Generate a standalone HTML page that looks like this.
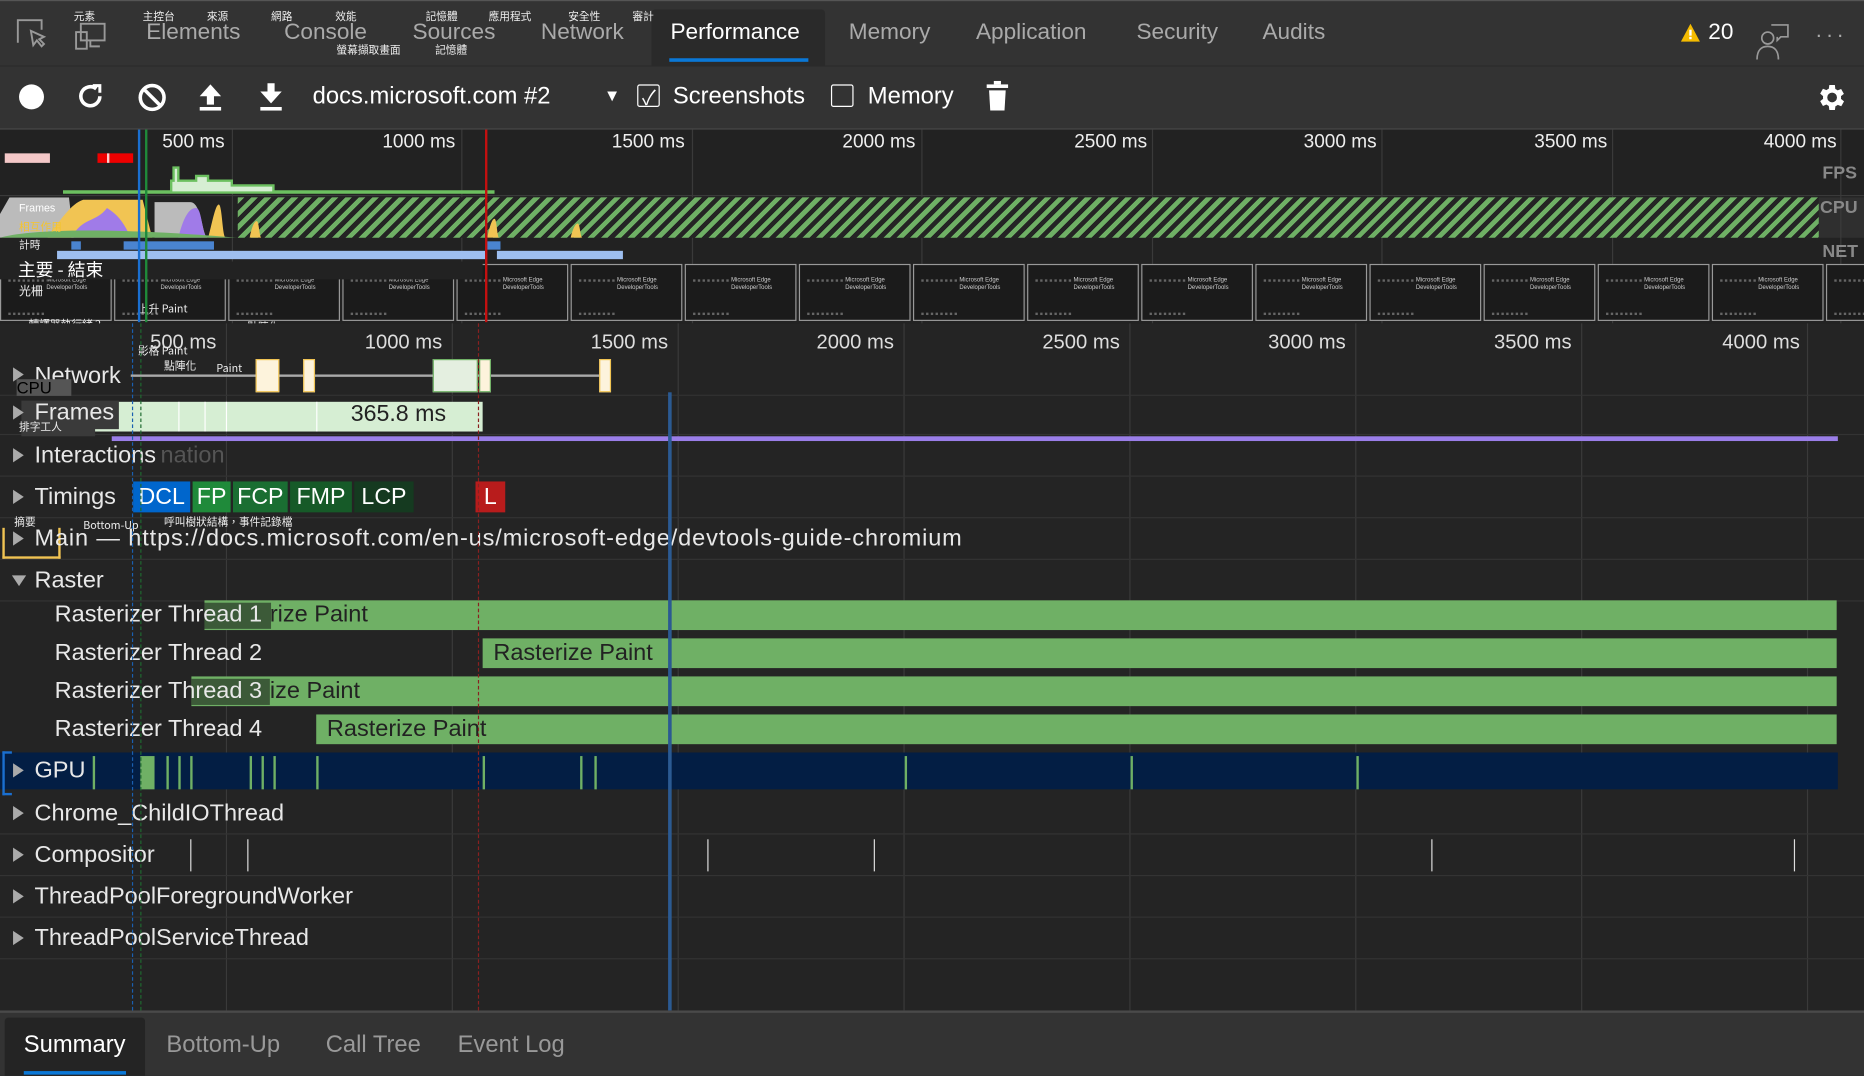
<!DOCTYPE html>
<html><head><meta charset="utf-8"><style>
html,body{margin:0;padding:0;background:#242424;overflow:hidden;width:1864px;height:1076px}
#s{position:absolute;left:0;top:0;width:1568px;height:905px;transform:scale(1.18878);transform-origin:0 0;font-family:"Liberation Sans","Noto Sans CJK TC",sans-serif;color:#ddd;background:#242424;overflow:hidden}
.a{position:absolute}
.t{position:absolute;font-size:19px;color:#aaa;top:17px}
.cj{position:absolute;font-size:9px;color:#eee;font-family:"Noto Sans CJK TC",sans-serif}
.vl{position:absolute;width:1px;background:#3a3a3a}
.tl{position:absolute;font-size:16px;color:#eee;top:111px;text-align:right;width:100px}
.rl{position:absolute;font-size:17px;color:#ddd;top:278px;text-align:right;width:100px}
.trk{position:absolute;left:0;width:1568px;border-bottom:1px solid #333}
.lab{position:absolute;left:29px;font-size:19.8px;color:#e8e8e8}
.tri{position:absolute;left:11px;width:0;height:0;border-top:6px solid transparent;border-bottom:6px solid transparent;border-left:9px solid #aaa}
.g{position:absolute;background:#6fb065}
.ss{position:absolute;top:222px;height:46px;width:92px;background:#1b1b1b;border:1px solid #999}
.ss:before{content:"";position:absolute;left:6px;top:12px;width:30px;height:26px;border-top:2px dotted #666;border-bottom:2px dotted #666}
.ss:after{content:"Microsoft Edge\A DeveloperTools";white-space:pre;position:absolute;left:38px;top:10px;font-size:5px;color:#ccc}
.tm{position:absolute;top:405px;height:26px;font-size:19.5px;color:#fff;line-height:26px;text-align:center}
.gl{position:absolute;top:636px;height:28px;width:2px;background:#6fb065}
.cl{position:absolute;top:706px;height:27px;width:1px;background:#ddd}
</style></head><body><div id="s">
<!-- tab bar -->
<div class="a" style="left:0;top:0;width:1568px;height:55px;background:#333;border-top:1px solid #555"></div>
<svg class="a" style="left:12px;top:14px" width="28" height="28" viewBox="0 0 28 28" fill="none" stroke="#999" stroke-width="1.6"><path d="M3 22V3h20v8"/><path d="M14 12l2 12 3-4 4 5 2-2-4-4 4-2z"/></svg>
<svg class="a" style="left:62px;top:17px" width="28" height="26" viewBox="0 0 28 26" fill="none" stroke="#999" stroke-width="1.6"><rect x="6" y="3" width="20" height="14"/><rect x="2" y="10" width="9" height="14"/><path d="M14 17v5h8"/></svg>
<div class="t" style="left:123px">Elements</div>
<div class="t" style="left:239px">Console</div>
<div class="t" style="left:347px">Sources</div>
<div class="t" style="left:455px">Network</div>
<div class="a" style="left:548px;top:8px;width:146px;height:47px;background:#2a2a2a;border-radius:3px 3px 0 0"></div>
<div class="t" style="left:564px;color:#fff">Performance</div>
<div class="a" style="left:563px;top:49px;width:117px;height:3px;background:#0a78d7"></div>
<div class="t" style="left:714px">Memory</div>
<div class="t" style="left:821px">Application</div>
<div class="t" style="left:956px">Security</div>
<div class="t" style="left:1062px">Audits</div>
<div class="cj" style="left:62px;top:7px">元素</div><div class="cj" style="left:120px;top:7px">主控台</div><div class="cj" style="left:174px;top:7px">來源</div><div class="cj" style="left:228px;top:7px">網路</div><div class="cj" style="left:282px;top:7px">效能</div><div class="cj" style="left:358px;top:7px">記憶體</div><div class="cj" style="left:411px;top:7px">應用程式</div><div class="cj" style="left:478px;top:7px">安全性</div><div class="cj" style="left:532px;top:7px">審計</div>
<div class="cj" style="left:283px;top:35px">螢幕擷取畫面</div><div class="cj" style="left:366px;top:35px">記憶體</div>
<svg class="a" style="left:1413px;top:19px" width="18" height="17" viewBox="0 0 18 17"><path d="M9 1L17 16H1z" fill="#f4bb00"/><rect x="8" y="6" width="2" height="5" fill="#fff"/><rect x="8" y="12" width="2" height="2" fill="#fff"/></svg>
<div class="a" style="left:1437px;top:17px;font-size:19px;color:#fff">20</div>
<svg class="a" style="left:1475px;top:18px" width="30" height="34" viewBox="0 0 30 34" fill="none" stroke="#999" stroke-width="1.4"><circle cx="12" cy="14" r="5"/><path d="M3 32c0-8 4-11 9-11s9 3 9 11"/><path d="M15 3h14v10h-6l-3 3v-3"/></svg>
<div class="a" style="left:1527px;top:19px;font-size:18px;color:#aaa;letter-spacing:3px">···</div>
<!-- toolbar -->
<div class="a" style="left:0;top:55px;width:1568px;height:52px;background:#333;border-top:1px solid #2a2a2a;border-bottom:2px solid #4a4a4a"></div>
<div class="a" style="left:16px;top:71px;width:21px;height:21px;border-radius:50%;background:#fff"></div>
<svg class="a" style="left:64px;top:69px" width="24" height="24" viewBox="0 0 24 24" fill="none" stroke="#fff" stroke-width="3"><path d="M20 12a8 8 0 1 1-3-6.3"/><path d="M14 3h6v6" stroke-width="2.5"/></svg>
<svg class="a" style="left:115px;top:69px" width="26" height="26" viewBox="0 0 26 26" fill="none" stroke="#fff" stroke-width="3"><circle cx="13" cy="13" r="10"/><path d="M6 6l14 14"/></svg>
<svg class="a" style="left:166px;top:69px" width="22" height="25" viewBox="0 0 22 25" fill="#fff"><path d="M11 2L2 12h6v7h6v-7h6z"/><rect x="2" y="21" width="18" height="3"/></svg>
<svg class="a" style="left:217px;top:69px" width="22" height="25" viewBox="0 0 22 25" fill="#fff"><path d="M11 18L2 8h6V1h6v7h6z"/><rect x="2" y="21" width="18" height="3"/></svg>
<div class="a" style="left:263px;top:70px;font-size:20px;color:#fff">docs.microsoft.com #2</div>
<div class="a" style="left:508px;top:72px;font-size:14px;color:#fff">▼</div>
<div class="a" style="left:536px;top:71px;width:17px;height:17px;border:1.5px solid #fff;border-radius:2px"></div>
<div class="a" style="left:540px;top:68px;font-size:17px;color:#fff">✓</div>
<div class="a" style="left:566px;top:70px;font-size:20px;color:#fff">Screenshots</div>
<div class="a" style="left:699px;top:71px;width:17px;height:17px;border:1.5px solid #fff;border-radius:2px"></div>
<div class="a" style="left:730px;top:70px;font-size:20px;color:#fff">Memory</div>
<svg class="a" style="left:829px;top:68px" width="20" height="26" viewBox="0 0 20 26" fill="#fff"><rect x="1" y="3" width="18" height="3"/><rect x="7" y="0" width="6" height="3"/><path d="M3 8h14l-1 17H4z"/></svg>
<svg class="a" style="left:1526px;top:68px" width="28" height="28" viewBox="0 0 24 24" fill="#fff"><path d="M19.4 13a7.5 7.5 0 0 0 0-2l2.1-1.6-2-3.5-2.5 1a7 7 0 0 0-1.7-1L15 3h-4l-.4 2.7a7 7 0 0 0-1.7 1l-2.5-1-2 3.5L6.5 11a7.5 7.5 0 0 0 0 2l-2.1 1.6 2 3.5 2.5-1a7 7 0 0 0 1.7 1L11 21h4l.4-2.7a7 7 0 0 0 1.7-1l2.5 1 2-3.5zM13 15.5a3.5 3.5 0 1 1 0-7 3.5 3.5 0 0 1 0 7z"/></svg>
<!-- overview -->
<div class="a" style="left:0;top:109px;width:1568px;height:163px;background:#222"></div>
<div class="vl" style="left:195px;top:109px;height:163px"></div><div class="vl" style="left:388px;top:109px;height:163px"></div><div class="vl" style="left:582px;top:109px;height:163px"></div><div class="vl" style="left:775px;top:109px;height:163px"></div><div class="vl" style="left:969px;top:109px;height:163px"></div><div class="vl" style="left:1162px;top:109px;height:163px"></div><div class="vl" style="left:1356px;top:109px;height:163px"></div><div class="vl" style="left:1548px;top:109px;height:163px"></div>
<div class="tl" style="left:89px">500 ms</div><div class="tl" style="left:283px">1000 ms</div><div class="tl" style="left:476px">1500 ms</div><div class="tl" style="left:670px">2000 ms</div><div class="tl" style="left:865px">2500 ms</div><div class="tl" style="left:1058px">3000 ms</div><div class="tl" style="left:1252px">3500 ms</div><div class="tl" style="left:1445px">4000 ms</div>
<div class="a" style="left:4px;top:129px;width:38px;height:8px;background:#f4c8c8"></div>
<div class="a" style="left:82px;top:129px;width:30px;height:8px;background:#e00"></div>
<div class="a" style="left:90px;top:129px;width:2px;height:8px;background:#fcc"></div>
<div class="a" style="left:0;top:164px;width:1568px;height:1px;background:#3a3a3a"></div>
<svg class="a" style="left:0;top:130px" width="420" height="36"><path d="M54 32V31H144V22H146V11H150V22H165V18H175V22H195V26H230V31H415V32z" fill="#d6eed3" stroke="#6cc060" stroke-width="2"/></svg>
<div class="a" style="left:200px;top:166px;width:1330px;height:34px;background:repeating-linear-gradient(135deg,#6fb065 0 4px,#242424 4px 8px)"></div>
<div class="a" style="left:1530px;top:166px;width:38px;height:34px;background:rgba(60,60,60,.5)"></div>
<svg class="a" style="left:0;top:166px" width="520" height="34"><path d="M0 34V14L8 0h50l4 34z" fill="#bbb"/><path d="M40 34C50 20 60 5 70 2h50l8 32z" fill="#f1c453"/><path d="M60 34c10-18 20-12 30-25 10 6 15 14 20 25z" fill="#a07be8"/><path d="M130 34V4h30c10 0 10 30 15 30z" fill="#bbb"/><path d="M150 34c5-20 10-25 15-25 5 0 5 25 10 25z" fill="#a07be8"/><path d="M175 34c3-10 6-28 9-28s3 28 6 28z" fill="#f1c453"/><path d="M210 34c2-10 4-14 6-14s2 14 4 14z" fill="#f1c453"/><path d="M410 34c2-10 4-16 6-16s2 16 4 16z" fill="#f1c453"/><path d="M480 34c2-8 4-12 6-12s2 12 4 12z" fill="#f1c453"/><path d="M0 34c20-6 80-10 200 0z" fill="#6fb065"/></svg>
<div class="a" style="left:16px;top:170px;font-size:9px;color:#fff">Frames</div>
<div class="cj" style="left:16px;top:184px;color:#f4c430">相互作用</div>
<div class="cj" style="left:16px;top:199px">計時</div>
<div class="a" style="left:60px;top:203px;width:8px;height:7px;background:#4a84d0"></div>
<div class="a" style="left:104px;top:203px;width:76px;height:7px;background:#4a84d0"></div>
<div class="a" style="left:409px;top:203px;width:12px;height:7px;background:#4a84d0"></div>
<div class="a" style="left:48px;top:211px;width:360px;height:7px;background:#9ebff0"></div>
<div class="a" style="left:418px;top:211px;width:106px;height:7px;background:#9ebff0"></div>
<div class="a" style="left:1533px;top:137px;font-size:15px;font-weight:bold;color:#888">FPS</div>
<div class="a" style="left:1531px;top:166px;font-size:15px;font-weight:bold;color:#888">CPU</div>
<div class="a" style="left:1533px;top:203px;font-size:15px;font-weight:bold;color:#888">NET</div>
<div class="ss" style="left:0"></div><div class="ss" style="left:96px"></div><div class="ss" style="left:192px"></div><div class="ss" style="left:288px"></div><div class="ss" style="left:384px"></div><div class="ss" style="left:480px"></div><div class="ss" style="left:576px"></div><div class="ss" style="left:672px"></div><div class="ss" style="left:768px"></div><div class="ss" style="left:864px"></div><div class="ss" style="left:960px"></div><div class="ss" style="left:1056px"></div><div class="ss" style="left:1152px"></div><div class="ss" style="left:1248px"></div><div class="ss" style="left:1344px"></div><div class="ss" style="left:1440px"></div><div class="ss" style="left:1536px"></div>
<div class="a" style="left:0;top:220px;width:406px;height:15px;background:#222"></div>
<div class="a" style="left:15px;top:216px;font-size:15px;color:#fff;font-family:'Noto Sans CJK TC',sans-serif">主要 - 結束</div>
<div class="cj" style="left:16px;top:236px;font-size:10px">光柵</div>
<div class="cj" style="left:116px;top:253px">上升 Paint</div>
<div class="cj" style="left:24px;top:266px">轉譯器執行緒 2</div><div class="cj" style="left:208px;top:268px">點陣化</div><div class="cj" style="left:252px;top:270px">Paint</div>
<div class="a" style="left:116px;top:109px;width:2px;height:162px;background:#1a6fd0"></div>
<div class="a" style="left:122px;top:109px;width:2px;height:162px;background:#1f8a3a"></div>
<div class="a" style="left:408px;top:109px;width:2px;height:162px;background:#c41010"></div>
<!-- flame area -->
<div class="a" style="left:0;top:272px;width:1568px;height:578px;background:#242424"></div>
<div class="vl" style="left:190px;top:272px;height:578px"></div><div class="vl" style="left:380px;top:272px;height:578px"></div><div class="vl" style="left:570px;top:272px;height:578px"></div><div class="vl" style="left:760px;top:272px;height:578px"></div><div class="vl" style="left:950px;top:272px;height:578px"></div><div class="vl" style="left:1140px;top:272px;height:578px"></div><div class="vl" style="left:1330px;top:272px;height:578px"></div><div class="vl" style="left:1520px;top:272px;height:578px"></div>
<div class="rl" style="left:82px">500 ms</div><div class="rl" style="left:272px">1000 ms</div><div class="rl" style="left:462px">1500 ms</div><div class="rl" style="left:652px">2000 ms</div><div class="rl" style="left:842px">2500 ms</div><div class="rl" style="left:1032px">3000 ms</div><div class="rl" style="left:1222px">3500 ms</div><div class="rl" style="left:1414px">4000 ms</div>
<div class="trk" style="top:300px;height:32px"></div><div class="tri" style="top:309px"></div><div class="lab" style="top:305px">Network</div>
<div class="a" style="left:110px;top:315px;width:400px;height:2px;background:#aaa"></div>
<div class="a" style="left:215px;top:302px;width:18px;height:26px;background:#fdf3dc;border:1px solid #f1c453"></div>
<div class="a" style="left:255px;top:302px;width:8px;height:26px;background:#fdf3dc;border:1px solid #f1c453"></div>
<div class="a" style="left:364px;top:302px;width:36px;height:26px;background:#e4efe0;border:1px solid #6fb065"></div>
<div class="a" style="left:403px;top:302px;width:8px;height:26px;background:#fdf3dc;border:1px solid #6fb065"></div>
<div class="a" style="left:504px;top:302px;width:8px;height:26px;background:#fdf3dc;border:1px solid #f1c453"></div>
<div class="a" style="left:14px;top:319px;width:46px;height:14px;background:#555;font-size:14px;color:#000;line-height:14px">CPU</div>
<div class="cj" style="left:138px;top:301px">點陣化</div><div class="cj" style="left:182px;top:303px">Paint</div><div class="cj" style="left:116px;top:288px">影格 Paint</div>
<div class="trk" style="top:333px;height:32px"></div>
<div class="a" style="left:52px;top:338px;width:354px;height:25px;background:#d6eed3"></div>
<div class="a" style="left:18px;top:337px;width:82px;height:24px;background:#3a3a3a"></div>
<div class="tri" style="top:341px"></div><div class="lab" style="top:336px">Frames</div>
<div class="a" style="left:295px;top:337px;font-size:19.5px;color:#222">365.8 ms</div>
<div class="a" style="left:150px;top:338px;width:1px;height:25px;background:#fff"></div><div class="a" style="left:172px;top:338px;width:1px;height:25px;background:#fff"></div><div class="a" style="left:190px;top:338px;width:1px;height:25px;background:#fff"></div><div class="a" style="left:266px;top:338px;width:1px;height:25px;background:#fff"></div>
<div class="a" style="left:18px;top:355px;width:62px;height:12px;background:#3a3a3a"></div><div class="cj" style="left:16px;top:352px">排字工人</div>
<div class="a" style="left:94px;top:367px;width:1452px;height:4px;background:#9a7ee8"></div>
<div class="trk" style="top:366px;height:34px"></div><div class="tri" style="top:377px"></div><div class="lab" style="top:372px">Interactions</div><div class="a" style="left:135px;top:372px;font-size:19.8px;color:#555">nation</div>
<div class="trk" style="top:400px;height:35px"></div><div class="tri" style="top:412px"></div><div class="lab" style="top:407px">Timings</div>
<div class="tm" style="left:112px;width:48px;background:#0066cc">DCL</div><div class="tm" style="left:162px;width:32px;background:#1f8a3a">FP</div><div class="tm" style="left:196px;width:46px;background:#1a6e32">FCP</div><div class="tm" style="left:244px;width:52px;background:#165a28">FMP</div><div class="tm" style="left:298px;width:50px;background:#153a20">LCP</div><div class="tm" style="left:400px;width:25px;background:#b81c1c">L</div>
<div class="trk" style="top:435px;height:35px"></div>
<div class="a" style="left:2px;top:444px;width:45px;height:24px;border:2px solid #f1c453;border-top:none"></div>
<div class="tri" style="top:447px"></div><div class="lab" style="top:442px;letter-spacing:0.75px">Main — https://docs.microsoft.com/en-us/microsoft-edge/devtools-guide-chromium</div>
<div class="cj" style="left:12px;top:432px">摘要</div><div class="cj" style="left:70px;top:435px">Bottom-Up</div><div class="cj" style="left:138px;top:432px">呼叫樹狀結構，事件記錄檔</div>
<div class="trk" style="top:470px;height:35px"></div>
<div class="a" style="left:10px;top:484px;border-left:6px solid transparent;border-right:6px solid transparent;border-top:9px solid #aaa"></div><div class="lab" style="top:477px">Raster</div>
<div class="g" style="left:172px;top:505px;width:1373px;height:25px"></div>
<div class="g" style="left:406px;top:537px;width:1139px;height:25px"></div>
<div class="g" style="left:161px;top:569px;width:1384px;height:25px"></div>
<div class="g" style="left:266px;top:601px;width:1279px;height:25px"></div>
<div class="a" style="left:172px;top:507px;width:56px;height:22px;background:#3c5a38"></div>
<div class="a" style="left:161px;top:571px;width:66px;height:22px;background:#3c5a38"></div>
<div class="a" style="left:227px;top:506px;font-size:19.8px;color:#222">rize Paint</div>
<div class="a" style="left:415px;top:538px;font-size:19.8px;color:#222">Rasterize Paint</div>
<div class="a" style="left:227px;top:570px;font-size:19.8px;color:#222">ize Paint</div>
<div class="a" style="left:275px;top:602px;font-size:19.8px;color:#222">Rasterize Paint</div>
<div class="lab" style="left:46px;top:506px">Rasterizer Thread 1</div>
<div class="lab" style="left:46px;top:538px">Rasterizer Thread 2</div>
<div class="lab" style="left:46px;top:570px">Rasterizer Thread 3</div>
<div class="lab" style="left:46px;top:602px">Rasterizer Thread 4</div>
<div class="a" style="left:0;top:633px;width:1546px;height:31px;background:#031e44"></div>
<div class="a" style="left:2px;top:632px;width:6px;height:33px;border:2px solid #1a6fd0;border-right:none"></div>
<div class="gl" style="left:78px"></div><div class="gl" style="left:118px;width:12px"></div><div class="gl" style="left:140px"></div><div class="gl" style="left:150px"></div><div class="gl" style="left:160px"></div><div class="gl" style="left:210px"></div><div class="gl" style="left:220px"></div><div class="gl" style="left:230px"></div><div class="gl" style="left:266px"></div><div class="gl" style="left:406px"></div><div class="gl" style="left:488px"></div><div class="gl" style="left:500px"></div><div class="gl" style="left:761px"></div><div class="gl" style="left:951px"></div><div class="gl" style="left:1141px"></div>
<div class="tri" style="top:642px"></div><div class="lab" style="top:637px">GPU</div>
<div class="trk" style="top:666px;height:35px"></div><div class="tri" style="top:678px"></div><div class="lab" style="top:673px">Chrome_ChildIOThread</div>
<div class="trk" style="top:701px;height:35px"></div><div class="tri" style="top:713px"></div><div class="lab" style="top:708px">Compositor</div>
<div class="cl" style="left:160px"></div><div class="cl" style="left:208px"></div><div class="cl" style="left:595px"></div><div class="cl" style="left:735px"></div><div class="cl" style="left:1204px"></div><div class="cl" style="left:1509px"></div>
<div class="trk" style="top:736px;height:35px"></div><div class="tri" style="top:748px"></div><div class="lab" style="top:743px">ThreadPoolForegroundWorker</div>
<div class="trk" style="top:771px;height:35px"></div><div class="tri" style="top:783px"></div><div class="lab" style="top:778px">ThreadPoolServiceThread</div>
<div class="a" style="left:111px;top:272px;width:0;height:578px;border-left:1px dashed #1a5fb0"></div>
<div class="a" style="left:118px;top:272px;width:0;height:578px;border-left:1px dashed #1f6a30"></div>
<div class="a" style="left:402px;top:272px;width:0;height:578px;border-left:1px dashed #8a2020"></div>
<div class="a" style="left:562px;top:330px;width:3px;height:520px;background:#2b5a92"></div>
<!-- bottom tabs -->
<div class="a" style="left:0;top:850px;width:1568px;height:55px;background:#333;border-top:2px solid #4a4a4a"></div>
<div class="a" style="left:4px;top:856px;width:118px;height:49px;background:#242424;border-radius:3px 3px 0 0"></div>
<div class="a" style="left:20px;top:868px;font-size:20px;color:#fff">Summary</div>
<div class="a" style="left:20px;top:901px;width:86px;height:3px;background:#0a78d7"></div>
<div class="a" style="left:140px;top:868px;font-size:20px;color:#999">Bottom-Up</div>
<div class="a" style="left:274px;top:868px;font-size:20px;color:#999">Call Tree</div>
<div class="a" style="left:385px;top:868px;font-size:20px;color:#999">Event Log</div>
</div></body></html>
